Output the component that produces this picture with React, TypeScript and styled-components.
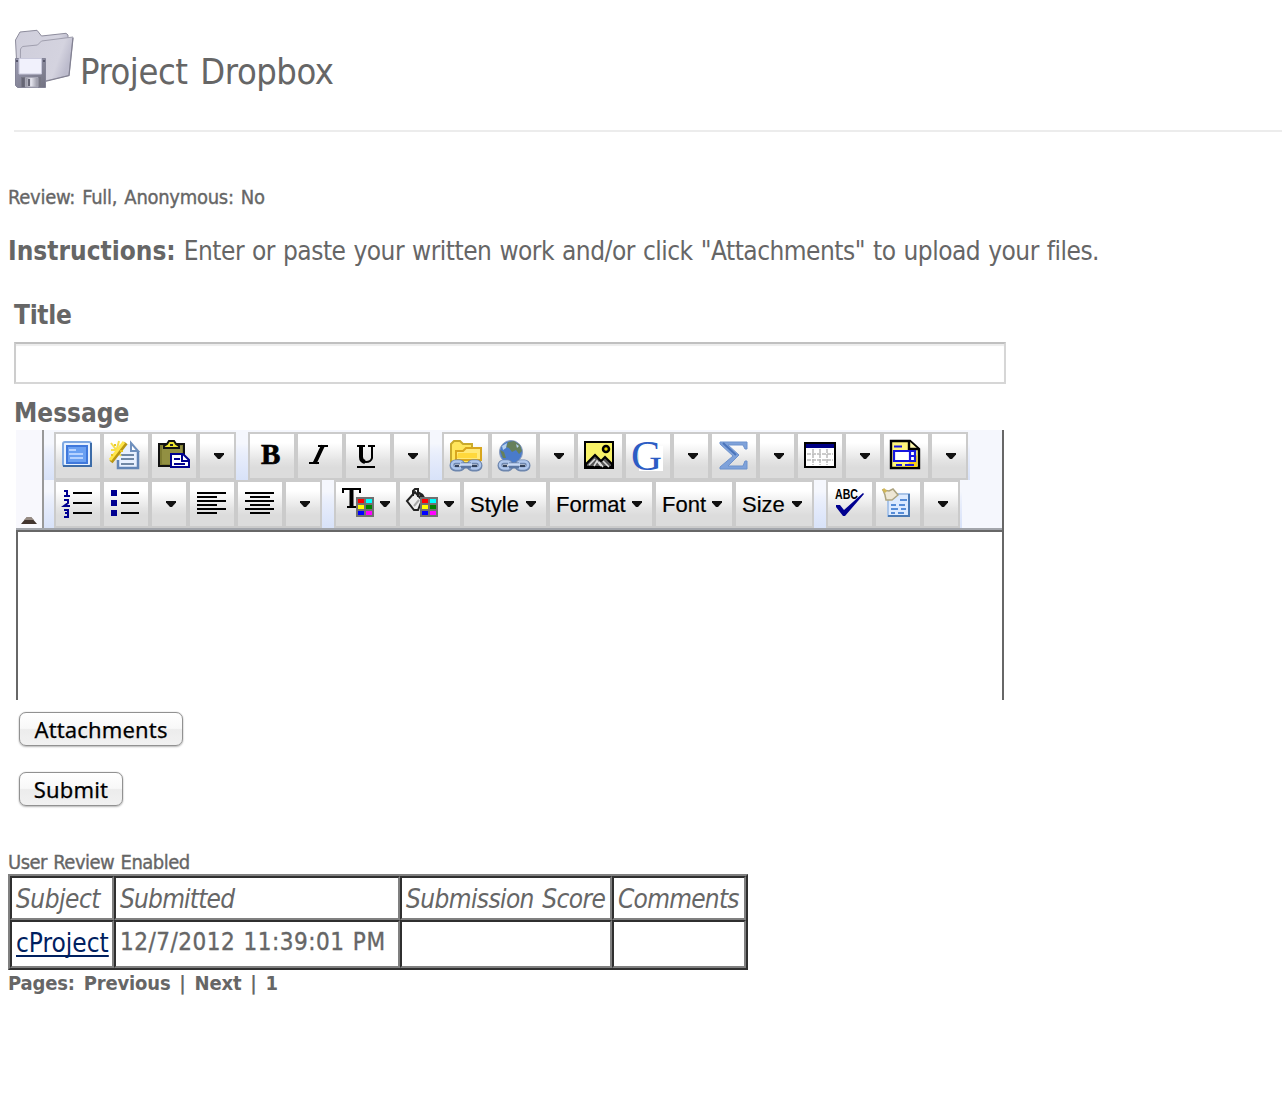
import React from "react";
import styled, { createGlobalStyle } from "styled-components";

const GlobalStyle = createGlobalStyle`
  body {
    margin: 0;
    background: #fff;
    color: #666;
    font-family: "DejaVu Sans Condensed", "DejaVu Sans", sans-serif;
    font-stretch: condensed;
    overflow: hidden;
  }
  * { box-sizing: border-box; }
`;

const Page = styled.main`
  display: flex;
  flex-direction: column;
  align-items: flex-start;
  height: 1098px;
  padding-left: 8px;
`;

const Header = styled.header`
  display: flex;
  align-self: stretch;
  height: 132px;
  margin-left: 6px;
  padding-top: 29px;
  border-bottom: 2px solid #ececec;
`;

const PageTitle = styled.h1`
  margin: 21px 0 0 4px;
  font-size: 36px;
  font-weight: 400;
  line-height: 44px;
  letter-spacing: -0.45px;
  word-spacing: 3px;
  white-space: nowrap;
`;

const Line = styled.div<{
  $size: number;
  $top: number;
  $left?: number;
  $spacing?: number;
  $words?: number;
  $bold?: boolean;
  $heavy?: boolean;
}>`
  margin: ${(p) => p.$top}px 0 0 ${(p) => p.$left ?? 0}px;
  font-size: ${(p) => p.$size}px;
  line-height: ${(p) => (p.$size > 22 ? 32 : 24)}px;
  letter-spacing: ${(p) => p.$spacing ?? 0}px;
  word-spacing: ${(p) => p.$words ?? 0}px;
  font-weight: ${(p) => (p.$bold ? 700 : 400)};
  -webkit-text-stroke: ${(p) => (p.$heavy ? 0.35 : 0)}px currentColor;
  white-space: nowrap;
`;

const Strong = styled.strong`
  letter-spacing: 0;
`;

const TitleInput = styled.input`
  width: 992px;
  height: 42px;
  margin: 11px 0 0 6px;
  padding: 4px 8px;
  border: 2px solid #d6d6d6;
  border-top-color: #c0c0c0;
  border-left-color: #cdcdcd;
  box-shadow: inset 0 2px 1px #ededed;
  font-size: 24px;
  outline: none;
`;

const Editor = styled.section`
  display: flex;
  flex-direction: column;
  width: 988px;
  height: 270px;
  margin: 1px 0 0 8px;
  border-right: 2px solid #676767;
`;

const ToolbarArea = styled.div`
  display: flex;
  height: 100px;
  background: #f5f7fd;
  border-bottom: 2px solid #a3a6ac;
`;

const Collapse = styled.div`
  display: flex;
  align-items: flex-end;
  justify-content: center;
  width: 28px;
  padding-bottom: 4px;
  background: #f8f8fd;
  border-right: 2px solid #999;
`;

const ToolbarRows = styled.div`
  padding-top: 2px;
`;

const ToolbarRow = styled.div`
  display: flex;
  gap: 12px;
  width: max-content;
  height: 48px;
  padding: 0 2px 0 10px;
  background: linear-gradient(#f5f7fd 0 24%, #edf1fc 36%, #e7edfb 50%, #dfe7fa 75%, #d8e2f8);
`;

const Group = styled.div`
  display: flex;
`;

const ToolButton = styled.button<{ $width: number }>`
  display: flex;
  align-items: center;
  width: ${(p) => p.$width}px;
  height: 48px;
  margin: 0;
  padding: 0 0 0 6px;
  border: 2px solid #cbcbcb;
  background: linear-gradient(#fff 0 20%, #f0f0f0 43%, #e4e4e4 60%, #dcdcdc 76%);
  color: #000;
  font: 22px/44px "Liberation Sans", Arial, sans-serif;
  white-space: nowrap;
`;

const Caption = styled.span`
  padding-top: 1px;
  -webkit-text-stroke: 0.2px #000;
`;

const Icon = styled.svg`
  flex: none;
  display: block;
  width: 32px;
  height: 32px;
  overflow: visible;
`;

const Arrow = styled.svg<{ $gap: number }>`
  flex: none;
  display: block;
  width: 10px;
  height: 6px;
  margin: 0 0 1px ${(p) => p.$gap}px;
`;

const Canvas = styled.div`
  flex: 1;
  border: solid #676767;
  border-width: 2px 0 0 2px;
`;

const PushButton = styled.button<{ $width: number; $top: number; $spacing: number }>`
  width: ${(p) => p.$width}px;
  height: 34px;
  margin: ${(p) => p.$top}px 0 0 11px;
  padding: 0 0 1px;
  border: 1px solid #919191;
  border-radius: 7px;
  background: linear-gradient(#fff 0%, #f8f8f8 48%, #ececec 52%, #f1f1f1 100%);
  box-shadow: 0 0 1px #aaa, 0 1px 2px #bbb;
  color: #000;
  font: 22px/30px "Noto Sans", "Open Sans", sans-serif;
  letter-spacing: ${(p) => p.$spacing}px;
  -webkit-text-stroke: 0.25px #000;
  white-space: nowrap;
`;

const Submissions = styled.table`
  width: 740px;
  height: 96px;
  table-layout: fixed;
  border-collapse: separate;
  border-spacing: 0;
  border: 2px solid;
  border-color: #808080 #2f2f2f #2f2f2f #808080;
`;

const Cell = styled.td<{
  $size?: number;
  $spacing?: number;
  $words?: number;
  $italic?: boolean;
  $lift?: number;
  $heavy?: boolean;
}>`
  padding: ${(p) => (p.$italic ? 2 : 0)}px 0 ${(p) => p.$lift ?? 0}px 4px;
  border: 2px solid;
  border-color: #2f2f2f #808080 #808080 #2f2f2f;
  font-size: ${(p) => p.$size ?? 26}px;
  font-style: ${(p) => (p.$italic ? "italic" : "normal")};
  line-height: 32px;
  letter-spacing: ${(p) => p.$spacing ?? 0}px;
  word-spacing: ${(p) => p.$words ?? 0}px;
  -webkit-text-stroke: ${(p) => (p.$heavy ? 0.35 : 0)}px currentColor;
  white-space: nowrap;
  vertical-align: middle;
`;

const HeadRow = styled.tr`
  height: 44px;
`;

const BodyRow = styled.tr`
  height: 48px;
`;

const SubjectLink = styled.a`
  color: #00205f;
  text-decoration: underline;
  text-decoration-thickness: 2px;
  text-underline-offset: 3px;
  text-decoration-skip-ink: none;
`;

const Down = ({ gap = 9 }: { gap?: number }) => (
  <Arrow $gap={gap} viewBox="0 0 10 6">
    <path d="M0 0H10V1.6L6 6H4L0 1.6Z" fill="#111" />
  </Arrow>
);

const ArrowButton = () => (
  <ToolButton $width={38} aria-label="More">
    <Down gap={8} />
  </ToolButton>
);

const ProjectIcon = () => (
  <svg width="62" height="62" viewBox="14 29 62 62">
    <defs>
      <linearGradient id="folder" x1="0" x2="1" y2="0.3">
        <stop offset="0" stopColor="#cfcedb" />
        <stop offset="0.8" stopColor="#d4d3df" />
        <stop offset="1" stopColor="#bdbccd" />
      </linearGradient>
      <linearGradient id="disk" x2="1" y2="1">
        <stop offset="0" stopColor="#9c9cb2" />
        <stop offset="1" stopColor="#737382" />
      </linearGradient>
      <linearGradient id="shutter">
        <stop offset="0" stopColor="#8e8e9c" />
        <stop offset="0.45" stopColor="#e5e5ee" />
        <stop offset="1" stopColor="#91919f" />
      </linearGradient>
    </defs>
    <path d="M17 70L15.5 40L20 32L37 30.3L41.5 36L66 33.3L68 35V45L44 70Z" fill="url(#folder)" stroke="#8d8c9c" />
    <path d="M20 80L20.5 49L22.5 46.5L37.5 45L41.5 41L73 37L69 75.5L45 81Z" fill="url(#folder)" stroke="#a09fae" />
    <path d="M73 38L69 75.5L45 81.5" fill="none" stroke="#828192" strokeWidth="1.2" />
    <path d="M15.5 58.5H45.5V87.5H17.5L15.5 85.5Z" fill="url(#disk)" stroke="#838396" />
    <path d="M19 58.5H41.5V74H19Z" fill="#f1f1fc" stroke="#c9c9dc" />
    <path d="M21 77H41V87H21Z" fill="#777784" />
    <path d="M25.5 77.5H38V87H25.5Z" fill="url(#shutter)" stroke="#a8a8b6" />
    <path d="M22 78H24.5V87H22ZM28 79H30V86H28Z" fill="#666675" />
    <path d="M16 60H18V62H16ZM43 60H45V62H43Z" fill="#55556a" />
  </svg>
);

const Maximize = () => (
  <Icon viewBox="0 0 32 32">
    <rect x="1" y="2" width="28" height="24" rx="2" fill="#e6f1ff" stroke="#7fa9e2" strokeWidth="2" />
    <path d="M1 26H29V3" fill="none" stroke="#3d6ca8" strokeWidth="2" />
    <rect x="5" y="6" width="20" height="17" fill="#6aa0f2" stroke="#3f78dc" strokeWidth="2" />
    <path d="M7 10H14M7 14H21M8 18H21" stroke="#b6d2ff" strokeWidth="2" />
  </Icon>
);

const Wizard = () => (
  <Icon viewBox="0 0 32 32">
    <path d="M7 4H21L28 11V28H7Z" fill="#e9f1ff" />
    <path d="M21 3V11H28Z" fill="#fff" stroke="#6f90bd" strokeWidth="2" />
    <path d="M8 20V28H28V12" fill="none" stroke="#6285b6" strokeWidth="2.5" />
    <path d="M11 15H24M11 19H24M11 24H24" stroke="#7188a5" strokeWidth="2" />
    <path d="M1 3L11 16M1 10H13M9 1L5 16" stroke="#f6df4d" strokeWidth="2" />
    <path d="M1 22L16 3" stroke="#b99612" strokeWidth="4" />
    <path d="M0 20L14 2" stroke="#ffe64b" strokeWidth="3" />
    <path d="M4 4H6V6H4ZM10 10H13V12H10ZM1 14H3V16H1Z" fill="#e7c622" />
  </Icon>
);

const Paste = () => (
  <Icon viewBox="0 0 32 32">
    <path d="M1 4H26V26H1Z" fill="#7e7c32" stroke="#111" strokeWidth="2" />
    <path d="M4 6H24V24H4Z" fill="#929042" />
    <path d="M6 8V6L9 4L11 1H16L18 4L21 6V8Z" fill="#eee62e" stroke="#111" strokeWidth="2" />
    <path d="M12 4H15V6H12Z" fill="#222" />
    <path d="M13 14H25L31 20V27H13Z" fill="#fff" stroke="#000090" strokeWidth="2" />
    <path d="M24 14V21H31M16 19H22M16 24H27" fill="none" stroke="#000090" strokeWidth="2" />
  </Icon>
);

const Chain = () => (
  <g fill="none">
    <rect x="2" y="22" width="11" height="7" rx="3.5" stroke="#6d86ae" strokeWidth="5" />
    <rect x="19" y="22" width="11" height="7" rx="3.5" stroke="#6d86ae" strokeWidth="5" />
    <rect x="2" y="21.5" width="11" height="7" rx="3.5" stroke="#aec6ec" strokeWidth="2.5" />
    <rect x="19" y="21.5" width="11" height="7" rx="3.5" stroke="#aec6ec" strokeWidth="2.5" />
    <path d="M5 26H9M22 26H27" stroke="#34435c" strokeWidth="2" />
    <path d="M11 25.5H21" stroke="#5b76a2" strokeWidth="6" />
    <path d="M10 24.5H22" stroke="#c8daf6" strokeWidth="2.5" />
  </g>
);

const FolderLink = () => (
  <Icon viewBox="0 0 32 32">
    <path d="M1 22V4L4 1H10L13 4H22V8H30V23H5Z" fill="#ffe65c" stroke="#c9aa2c" strokeWidth="2" />
    <path d="M6 20V11H13L16 8H31V20Z" fill="#ffe978" stroke="#d8a61d" strokeWidth="2" />
    <path d="M8 13H27V18H7Z" fill="#ffd83b" />
    <Chain />
  </Icon>
);

const GlobeLink = () => (
  <Icon viewBox="0 0 32 32">
    <circle cx="13" cy="12" r="11.5" fill="#4a7bcb" stroke="#8b9dbd" />
    <path d="M10 2L16 1L22 5L24 11L21 14L18 10L14 12L11 8L8 7ZM2 10L6 12L8 18L5 18Z" fill="#66805a" />
    <path d="M4 6L9 3L8 8L5 10ZM18 4L21 6L19 8Z" fill="#b6d1ee" />
    <Chain />
  </Icon>
);

const Picture = () => (
  <Icon viewBox="0 0 32 32">
    <rect x="1" y="2" width="28" height="26" fill="#f8f268" stroke="#000" strokeWidth="2" />
    <circle cx="22" cy="9" r="3" fill="#e7d800" stroke="#000" strokeWidth="2.5" />
    <path d="M2 27V24L11 15L17 21L21 17L28 24V27Z" fill="#555" stroke="#000" strokeWidth="2" />
    <path d="M5 25L11 19M10 26L13 21L17 26M19 21L25 27M15 22L19 27" stroke="#ddd" strokeWidth="1.6" fill="none" />
  </Icon>
);

const TableIcon = () => (
  <Icon viewBox="0 0 32 32">
    <rect x="1" y="3" width="30" height="24" fill="#fff" stroke="#000" strokeWidth="2" />
    <path d="M2 4H30V8H2Z" fill="#000084" />
    <path d="M3 14H29M3 20H29M9 9V25M16 9V25M23 9V25" stroke="#bbb" strokeWidth="1.5" strokeDasharray="4 1" />
  </Icon>
);

const Template = () => (
  <Icon viewBox="0 0 32 32">
    <path d="M1 1H20L29 9V28H1Z" fill="#fff47a" stroke="#000" strokeWidth="2.4" />
    <path d="M27 15V27H15Z" fill="#f5cc17" />
    <path d="M19 1V9H28" fill="#fff9b0" stroke="#000" strokeWidth="2.4" />
    <path d="M4 6.5H12M6 25H12M15 25H24" stroke="#1616df" strokeWidth="2" />
    <path d="M4 11H25V21H4Z" fill="#fff" stroke="#1616df" strokeWidth="2.2" />
    <path d="M20 11V21M20 16H25" stroke="#1616df" strokeWidth="2.2" />
  </Icon>
);

const GlyphText = styled.text`
  font-family: "Liberation Serif", "Times New Roman", serif;
`;

const Tiny = styled.text`
  font-family: "Liberation Sans", Arial, sans-serif;
  font-weight: 700;
`;

const Bold = () => (
  <Icon viewBox="0 0 32 32">
    <GlyphText x="5" y="24" fontSize="29" fontWeight="700" stroke="#000" strokeWidth="0.7">B</GlyphText>
  </Icon>
);

const Italic = () => (
  <Icon viewBox="0 0 32 32">
    <path d="M14 6H24M5 23H15M19 6L10 23" stroke="#000" strokeWidth="2" fill="none" />
    <path d="M19 5.5L10.5 23.5" stroke="#000" strokeWidth="4" />
  </Icon>
);

const Underline = () => (
  <Icon viewBox="0 0 32 32">
    <path d="M5 6H13M16 6H23M9 6V17Q9 22 14 22Q19 22 20 18V6" fill="none" stroke="#000" strokeWidth="2" />
    <path d="M9 5V17Q9 21 13 22" fill="none" stroke="#000" strokeWidth="4" />
    <path d="M5 27H23" stroke="#000" strokeWidth="2" />
  </Icon>
);

const Symbol = () => (
  <Icon viewBox="0 0 32 32">
    <rect x="7" y="6" width="24" height="25" fill="#fff" />
    <GlyphText x="-1" y="30" fontSize="43" fill="#2c5cc4">G</GlyphText>
  </Icon>
);

const Sigma = () => (
  <Icon viewBox="0 0 32 32">
    <path d="M2 2H29V9H27L25 5H10L21 15L10 26H25L27 21H29V29H2V27L15 16L2 4Z" fill="#7fa2da" stroke="#6d92cd" />
    <path d="M5 3L18 15" stroke="#4a74bb" strokeWidth="2" />
  </Icon>
);

const Numbered = () => (
  <Icon viewBox="0 0 32 32">
    <path d="M2 3H5V8M2 8H8M2 12H6V15L2 18H8M2 22H6V25H3M6 25V29H2" fill="none" stroke="#000090" strokeWidth="2" />
    <path d="M11 5H30M11 15H30M11 25H30" stroke="#000" strokeWidth="2" />
  </Icon>
);

const Bullets = () => (
  <Icon viewBox="0 0 32 32">
    <path d="M1 2H7V8H1ZM1 12H7V18H1ZM1 22H7V28H1Z" fill="#000090" />
    <path d="M11 5H29M11 15H29M11 25H29" stroke="#000" strokeWidth="2" />
  </Icon>
);

const AlignLeft = () => (
  <Icon viewBox="0 0 32 32">
    <path d="M1 5H30M1 9H21M1 13H30M1 17H21M1 21H30M1 25H21" stroke="#000" strokeWidth="2" />
  </Icon>
);

const AlignCenter = () => (
  <Icon viewBox="0 0 32 32">
    <path d="M1 5H30M6 9H26M1 13H30M6 17H26M1 21H30M6 25H26" stroke="#000" strokeWidth="2" />
  </Icon>
);

const Palette = () => (
  <g>
    <rect x="14" y="9" width="18" height="20" fill="#707070" />
    <rect x="16" y="11" width="6" height="4" fill="#f00" />
    <rect x="24" y="11" width="6" height="4" fill="#0ff" />
    <rect x="16" y="17" width="6" height="4" fill="#ff0" />
    <rect x="24" y="17" width="6" height="4" fill="#008000" />
    <rect x="16" y="23" width="6" height="4" fill="#00f" />
    <rect x="24" y="23" width="6" height="4" fill="#f0f" />
  </g>
);

const TextColor = () => (
  <Icon viewBox="0 0 32 32">
    <path d="M1 5V1H18V5M9.5 1V19M5 19H14" fill="none" stroke="#000" strokeWidth="2" />
    <path d="M9.5 1V19" stroke="#000" strokeWidth="4" />
    <Palette />
  </Icon>
);

const FillColor = () => (
  <Icon viewBox="0 0 32 32">
    <path d="M1 13L9 4L16 12L12 22L8 22Z" fill="#eee" stroke="#222" strokeWidth="2" />
    <path d="M7 8V3L9 1H12V9" fill="none" stroke="#222" strokeWidth="2" />
    <path d="M12 3L17 6L20 11V16L15 12Z" fill="#222" />
    <path d="M8 18L13 12" stroke="#aaa" strokeWidth="2" />
    <Palette />
  </Icon>
);

const Spell = () => (
  <Icon viewBox="0 0 32 32">
    <Tiny x="1" y="11" fontSize="14" textLength="23" lengthAdjust="spacingAndGlyphs">ABC</Tiny>
    <path d="M2 17H6L10 22L29 5L30 6L11 28H9L2 19Z" fill="#000090" />
  </Icon>
);

const Preview = () => (
  <Icon viewBox="0 0 32 32">
    <path d="M6 6H27V28H6Z" fill="#dceaff" stroke="#a9c4e8" strokeWidth="2" />
    <path d="M6 28H27V6" fill="none" stroke="#4a79b4" strokeWidth="2" />
    <path d="M18 12H25M9 17H14M17 17H23M9 21H16M19 21H24M9 25H13M16 25H22" stroke="#568cd7" strokeWidth="2" />
    <path d="M1 2L7 3L11 1L16 7L10 12L4 12L3 7Z" fill="#eee7d5" stroke="#ada480" strokeWidth="1.5" />
    <path d="M1 1L4 4" stroke="#d2b756" strokeWidth="3" />
  </Icon>
);

const Tool = ({ children, width = 48 }: { children: React.ReactNode; width?: number }) => (
  <ToolButton $width={width}>{children}</ToolButton>
);

export default function App() {
  return (
    <>
      <GlobalStyle />
      <Page>
        <Header>
          <ProjectIcon />
          <PageTitle>Project Dropbox</PageTitle>
        </Header>
        <Line $size={20} $top={53} $spacing={-0.28} $words={1.7} $heavy>Review: Full, Anonymous: No</Line>
        <Line $size={26} $top={26} $spacing={-0.5} $words={1.1}>
          <Strong>Instructions:</Strong> Enter or paste your written work and/or click "Attachments" to upload your files.
        </Line>
        <Line as="label" htmlFor="title" $size={26} $top={32} $left={6} $spacing={-0.3} $bold>Title</Line>
        <TitleInput id="title" />
        <Line $size={26} $top={13} $left={6} $bold>Message</Line>
        <Editor>
          <ToolbarArea>
            <Collapse>
              <svg width="16" height="8" viewBox="0 0 16 8">
                <path d="M0 8L6 1H10L16 8Z" fill="#42352f" />
                <path d="M3 4L6 1H10L13 4Z" fill="#968b83" />
              </svg>
            </Collapse>
            <ToolbarRows>
              <ToolbarRow>
                <Group>
                  <Tool><Maximize /></Tool>
                  <Tool><Wizard /></Tool>
                  <Tool><Paste /></Tool>
                  <ArrowButton />
                </Group>
                <Group>
                  <Tool><Bold /></Tool>
                  <Tool><Italic /></Tool>
                  <Tool><Underline /></Tool>
                  <ArrowButton />
                </Group>
                <Group>
                  <Tool><FolderLink /></Tool>
                  <Tool><GlobeLink /></Tool>
                  <ArrowButton />
                  <Tool><Picture /></Tool>
                  <Tool><Symbol /></Tool>
                  <ArrowButton />
                  <Tool><Sigma /></Tool>
                  <ArrowButton />
                  <Tool><TableIcon /></Tool>
                  <ArrowButton />
                  <Tool><Template /></Tool>
                  <ArrowButton />
                </Group>
              </ToolbarRow>
              <ToolbarRow>
                <Group>
                  <Tool><Numbered /></Tool>
                  <Tool><Bullets /></Tool>
                  <ArrowButton />
                  <Tool><AlignLeft /></Tool>
                  <Tool><AlignCenter /></Tool>
                  <ArrowButton />
                </Group>
                <Group>
                  <Tool width={64}><TextColor /><Down gap={6} /></Tool>
                  <Tool width={64}><FillColor /><Down gap={6} /></Tool>
                  <Tool width={86}><Caption>Style</Caption><Down gap={7} /></Tool>
                  <Tool width={106}><Caption>Format</Caption><Down gap={6} /></Tool>
                  <Tool width={80}><Caption>Font</Caption><Down gap={6} /></Tool>
                  <Tool width={80}><Caption>Size</Caption><Down gap={7} /></Tool>
                </Group>
                <Group>
                  <Tool><Spell /></Tool>
                  <Tool><Preview /></Tool>
                  <ArrowButton />
                </Group>
              </ToolbarRow>
            </ToolbarRows>
          </ToolbarArea>
          <Canvas />
        </Editor>
        <PushButton $width={164} $top={12} $spacing={0.15}>Attachments</PushButton>
        <PushButton $width={104} $top={26} $spacing={0.15}>Submit</PushButton>
        <Line $size={20} $top={44} $spacing={-0.5} $words={1} $heavy>User Review Enabled</Line>
        <Submissions>
          <colgroup>
            <col style={{ width: 104 }} />
            <col style={{ width: 286 }} />
            <col style={{ width: 212 }} />
            <col style={{ width: 134 }} />
          </colgroup>
          <tbody>
            <HeadRow>
              <Cell $italic $spacing={-0.5}>Subject</Cell>
              <Cell $italic $spacing={-0.8}>Submitted</Cell>
              <Cell $italic $spacing={-0.6} $words={1.5}>Submission Score</Cell>
              <Cell $italic $spacing={-0.75}>Comments</Cell>
            </HeadRow>
            <BodyRow>
              <Cell $lift={2}><SubjectLink href="#">cProject</SubjectLink></Cell>
              <Cell $size={24} $spacing={0.5} $words={1} $lift={4} $heavy>12/7/2012 11:39:01 PM</Cell>
              <Cell />
              <Cell />
            </BodyRow>
          </tbody>
        </Submissions>
        <Line $size={20} $top={1} $spacing={-0.15} $words={2.7} $bold>Pages: Previous | Next | 1</Line>
      </Page>
    </>
  );
}
